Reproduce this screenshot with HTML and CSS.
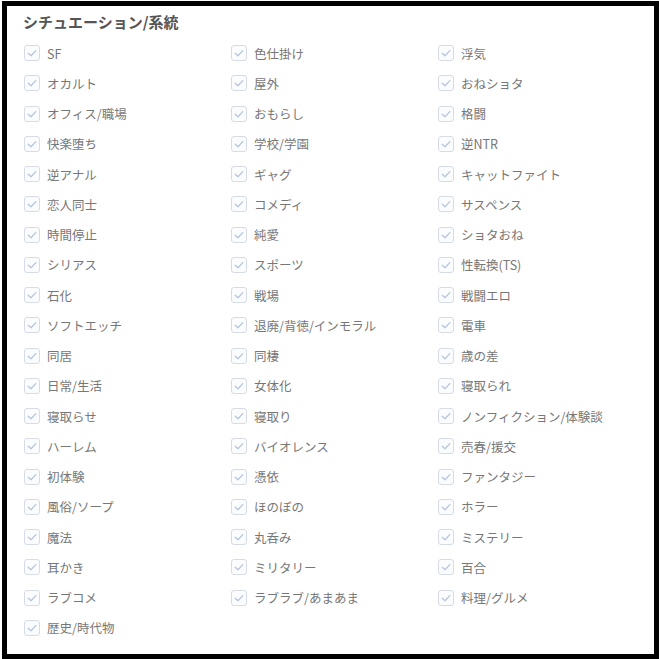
FILE: index.html
```html
<!DOCTYPE html>
<html lang="ja">
<head>
<meta charset="utf-8">
<link rel="stylesheet" href="styles.css">
</head>
<body>
<div class="frame">
  <div class="title">シチュエーション/系統</div>
  <div class="grid" id="grid"></div>
</div>
<script>
const items = [
"SF","色仕掛け","浮気",
"オカルト","屋外","おねショタ",
"オフィス/職場","おもらし","格闘",
"快楽堕ち","学校/学園","逆NTR",
"逆アナル","ギャグ","キャットファイト",
"恋人同士","コメディ","サスペンス",
"時間停止","純愛","ショタおね",
"シリアス","スポーツ","性転換(TS)",
"石化","戦場","戦闘エロ",
"ソフトエッチ","退廃/背徳/インモラル","電車",
"同居","同棲","歳の差",
"日常/生活","女体化","寝取られ",
"寝取らせ","寝取り","ノンフィクション/体験談",
"ハーレム","バイオレンス","売春/援交",
"初体験","憑依","ファンタジー",
"風俗/ソープ","ほのぼの","ホラー",
"魔法","丸呑み","ミステリー",
"耳かき","ミリタリー","百合",
"ラブコメ","ラブラブ/あまあま","料理/グルメ",
"歴史/時代物"];
const g = document.getElementById('grid');
for (const t of items) {
  const d = document.createElement('label');
  d.className = 'item';
  d.innerHTML = '<span class="box"><svg viewBox="0 0 16 16" width="16" height="16"><polyline points="4.2,8.3 7,10.8 11.8,5.6" fill="none" stroke="#b6c4de" stroke-width="1.3" stroke-linecap="round" stroke-linejoin="round"/></svg></span><span class="label"></span>';
  d.querySelector('.label').textContent = t;
  g.appendChild(d);
}
</script>
</body>
</html>
```
FILE: styles.css
```css
html, body {
  margin: 0;
  padding: 0;
  background: #fff;
}
body {
  padding: 1px 1px 0 2px;
  font-family: "Noto Sans CJK JP", "Noto Sans", sans-serif;
}
.frame {
  box-sizing: border-box;
  height: 658px;
  border: 5px solid #000;
  padding: 6px 10px 0 17px;
  background: #fff;
}
.title {
  font-size: 15px;
  font-weight: bold;
  color: #555;
  line-height: 20px;
  height: 20px;
  margin-left: -1px;
}
.grid {
  display: grid;
  grid-template-columns: 207px 207px 207px;
  grid-auto-rows: 30.25px;
  margin-top: 6px;
}
.item {
  display: flex;
  align-items: center;
  gap: 7px;
}
.box {
  box-sizing: border-box;
  width: 16px;
  height: 16px;
  border: 1px solid #d6dbe6;
  border-radius: 3px;
  background: #fbfcfe;
  display: flex;
  flex: none;
}
.box svg {
  margin: -1px;
}
.label {
  font-size: 12.5px;
  color: #777;
  white-space: nowrap;
}
```
